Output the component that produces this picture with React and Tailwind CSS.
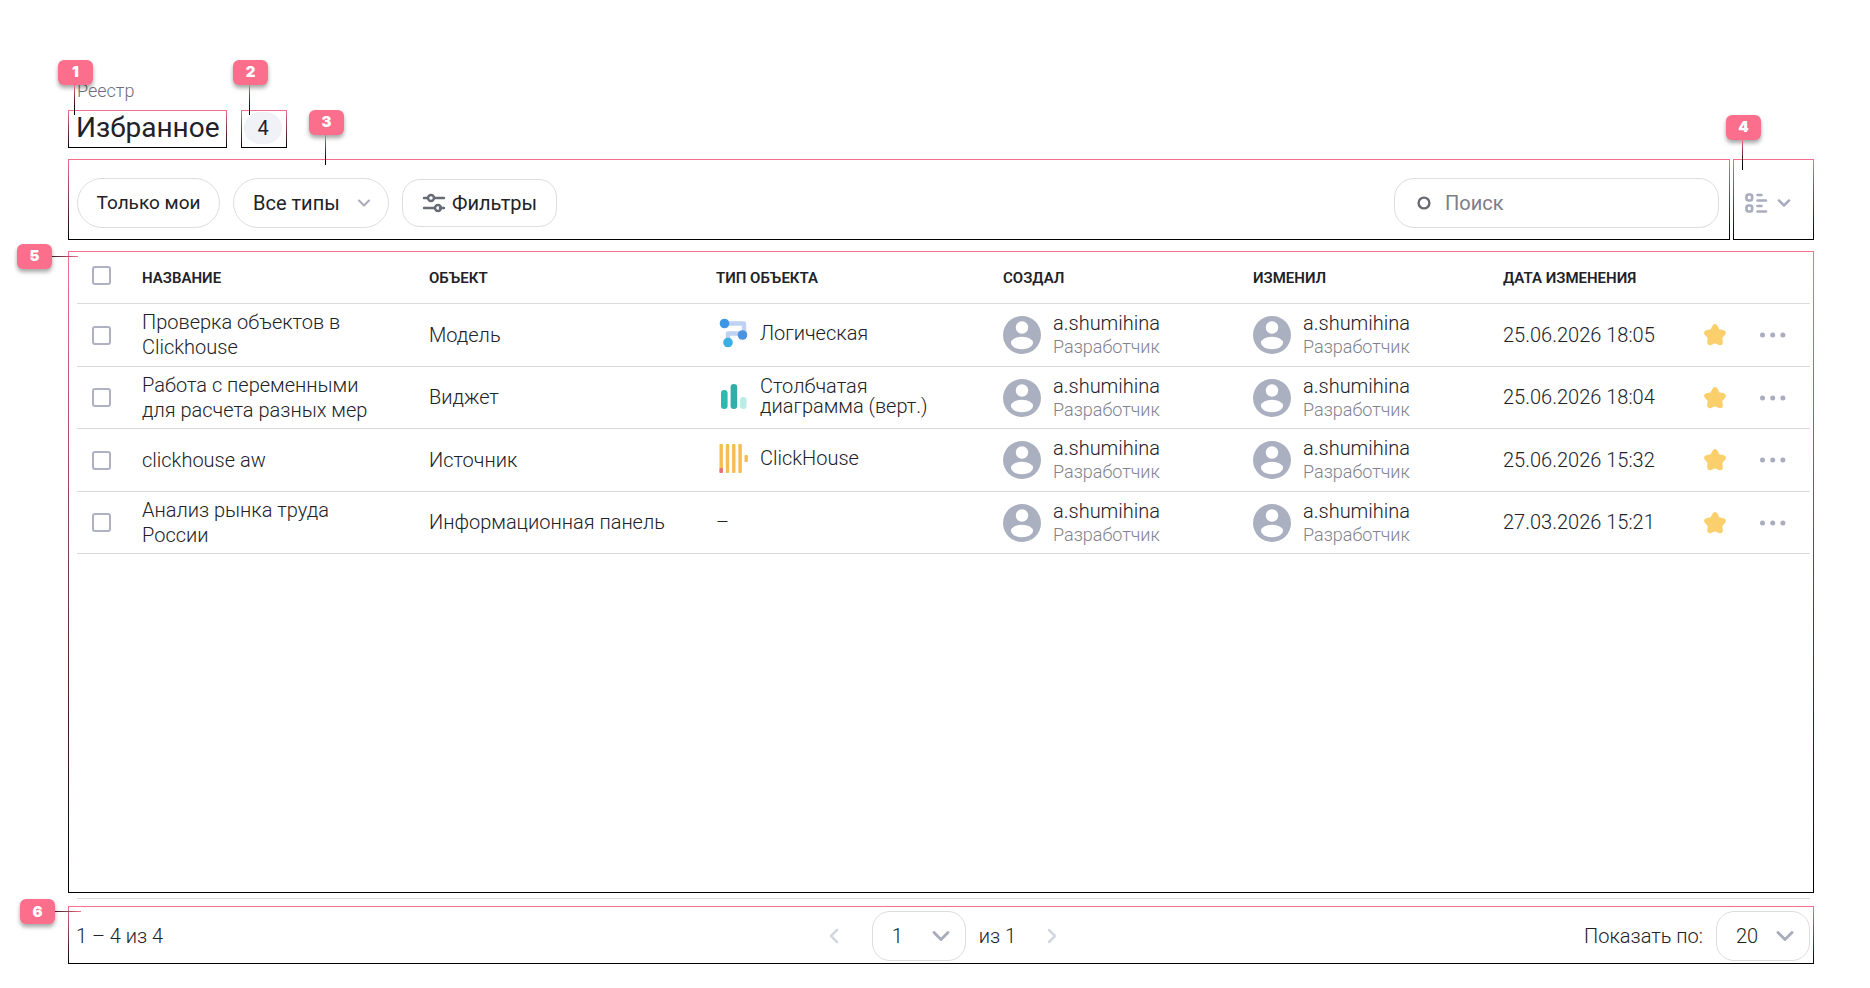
import { ChevronDown, ChevronLeft, ChevronRight } from 'lucide-react';

const ROWS = [
  { name: 'Проверка объектов в Clickhouse', object: 'Модель', type: 'Логическая', icon: LogicIcon, date: '25.06.2026 18:05' },
  { name: 'Работа с переменными для расчета разных мер', object: 'Виджет', type: 'Столбчатая диаграмма (верт.)', icon: BarsIcon, date: '25.06.2026 18:04' },
  { name: 'clickhouse aw', object: 'Источник', type: 'ClickHouse', icon: ClickHouseIcon, date: '25.06.2026 15:32' },
  { name: 'Анализ рынка труда России', object: 'Информационная панель', type: null, date: '27.03.2026 15:21' },
];

const HEADERS = ['Название', 'Объект', 'Тип объекта', 'Создал', 'Изменил', 'Дата изменения'];

const FRAME = 'relative border border-solid [border-image:linear-gradient(#f9708d,#000)_1]';

function LogicIcon() {
  return (
    <svg viewBox="0 0 32 32" className="size-8 shrink-0" fill="none">
      <path d="M7 6.5h19v11.5M10 25v-8.500h15" stroke="#bfd2f4" strokeWidth="4.4" strokeLinejoin="round" />
      <circle cx="6.500" cy="6.500" r="4.800" fill="#3e97e4" />
      <circle cx="24.500" cy="18" r="4.800" fill="#4b93e2" />
      <circle cx="10" cy="25.500" r="4.800" fill="#38b0e5" />
    </svg>
  );
}

function BarsIcon() {
  return (
    <svg viewBox="0 0 32 32" className="size-8 shrink-0">
      <rect x="3" y="10" width="6.6" height="19" rx="3.2" fill="#2fb9ae" />
      <rect x="12.600" y="4" width="6.6" height="25" rx="3.2" fill="#33ada9" />
      <rect x="22" y="17" width="6.6" height="12" rx="3.2" fill="#bdebe5" />
    </svg>
  );
}

function ClickHouseIcon() {
  return (
    <svg viewBox="0 0 32 32" className="size-8 shrink-0" fill="#f3bd50">
      <rect x="1.500" y="2" width="3.4" height="29" rx="1" />
      <rect x="7.800" y="2" width="3.4" height="29" rx="1" />
      <rect x="14.100" y="2" width="3.4" height="29" rx="1" />
      <rect x="20.400" y="2" width="3.4" height="29" rx="1" />
      <rect x="26.500" y="13" width="3.4" height="7" rx="1" />
      <rect x="1.500" y="26" width="3.4" height="5" rx="1" fill="#e46f84" />
    </svg>
  );
}

function Pin({ n, side, className }) {
  return (
    <div className={`absolute z-10 flex items-center ${side ? 'flex-row' : 'flex-col'} ${className}`}>
      <span className="flex h-[25px] w-[35px] items-center justify-center rounded-md bg-[#fb6f8c] font-['Inter'] text-[15px] font-black text-white shadow-[0_3px_4px_rgba(0,0,0,0.35)]">
        {n}
      </span>
      <span
        className={
          side
            ? 'h-px w-[26px] bg-linear-to-r from-[#3d1a24] to-[#fb6f8c]'
            : 'mr-[2px] h-[30px] w-px bg-linear-to-b from-[#fb6f8c] to-black'
        }
      />
    </div>
  );
}

function Select({ label, value, className, selectClass, chevronClass }) {
  return (
    <div className={`relative flex items-center ${className}`}>
      <select
        aria-label={label}
        defaultValue={value}
        className={`h-[50px] w-full appearance-none border border-[#dcdde1] bg-white pl-[19px] text-xl ${selectClass}`}
      >
        <option>{value}</option>
      </select>
      <ChevronDown className={`pointer-events-none absolute text-[#a9adb9] ${chevronClass}`} strokeWidth={2.5} />
    </div>
  );
}

function Checkbox({ label }) {
  return (
    <input
      type="checkbox"
      aria-label={label}
      className="ml-[15px] block size-[19px] appearance-none rounded-[3px] border-2 border-[#adb1c1] bg-white"
    />
  );
}

function User() {
  return (
    <div className="flex items-center gap-3">
      <svg viewBox="0 0 38 38" className="size-[38px] shrink-0">
        <circle cx="19" cy="19" r="19" fill="#abb0c1" />
        <circle cx="19" cy="11.5" r="6.2" fill="#fff" />
        <ellipse cx="19" cy="27" rx="11" ry="6.2" fill="#fff" />
      </svg>
      <div>
        <div className="text-xl leading-6">a.shumihina</div>
        <div className="text-lg leading-6 text-[#7f828e]">Разработчик</div>
      </div>
    </div>
  );
}

export default function App() {
  return (
    <div className="flex min-h-screen flex-col bg-white pt-[79px] pr-14 pb-6 pl-[68px] font-['Roboto',sans-serif] text-[#212227]">
      <header>
        <div className="mb-[7px] pl-[9px] text-lg leading-6 font-light text-[#6c6f7b]">Реестр</div>
        <div className="flex gap-[14px]">
          <div className={`${FRAME} h-[38px] w-[159px] pl-[7px]`}>
            <Pin n={1} className="-top-[51px] -left-[11px]" />
            <h1 className="text-[28px] leading-[34px]">Избранное</h1>
          </div>
          <div className={`${FRAME} h-[38px] w-[46px] pt-px pl-[2px]`}>
            <Pin n={2} className="-top-[51px] -left-[9px]" />
            <span className="flex h-8 w-[38px] items-center justify-center rounded-full bg-[#f1f2f8] text-xl">4</span>
          </div>
        </div>
      </header>

      <div className="mt-[11px] flex gap-[3px]">
        <div className={`${FRAME} flex h-[81px] flex-1 items-center gap-[13px] pt-[7px] pr-[10px] pl-2`}>
          <Pin n={3} className="-top-[50px] left-60" />
          <button className="h-[50px] w-[143px] rounded-full border border-[#dcdde1] text-[19px]">Только мои</button>
          <Select
            label="Тип объекта"
            value="Все типы"
            className="w-[156px]"
            selectClass="rounded-full"
            chevronClass="right-[15px] size-5"
          />
          <button className="flex h-12 w-[155px] items-center justify-center gap-[6px] rounded-[18px] border border-[#dcdde1] text-xl">
            <svg viewBox="0 0 24 24" className="size-6" fill="none" stroke="#666b76" strokeWidth="2.4" strokeLinecap="round">
              <path d="M2 7h4M12 7h10M2 17h10M18 17h4" />
              <circle cx="9" cy="7" r="3" />
              <circle cx="16" cy="17" r="3" />
            </svg>
            Фильтры
          </button>
          <label className="ml-auto flex h-[50px] w-[325px] items-center gap-[14px] rounded-[20px] border border-[#dcdde1] pl-[22px]">
            <svg viewBox="0 0 14 14" className="size-[14px]">
              <circle cx="7" cy="7" r="5.4" fill="none" stroke="#666a73" strokeWidth="2.4" />
            </svg>
            <input
              type="text"
              aria-label="Поиск"
              placeholder="Поиск"
              className="min-w-0 flex-1 text-xl outline-none placeholder:text-[#7c7e87]"
            />
          </label>
        </div>
        <div className={`${FRAME} flex h-[81px] w-[81px] items-center pt-[7px] pl-[10px]`}>
          <Pin n={4} className="-top-[45px] -left-2" />
          <button aria-label="Вид списка" className="flex items-center gap-[6px] text-[#a9adbd]">
            <svg viewBox="0 0 24 24" className="size-6" fill="none" stroke="currentColor" strokeWidth="2.6" strokeLinecap="round">
              <rect x="2.5" y="3.5" width="5.6" height="6" rx="2" />
              <rect x="2.5" y="14.5" width="5.6" height="6" rx="2" />
              <path d="M13.500 4h4M13.500 9.500h8.500M13.500 15h4M13.500 20.500h8.500" />
            </svg>
            <ChevronDown className="size-5" strokeWidth={3} />
          </button>
        </div>
      </div>

      <div className={`${FRAME} mt-[11px] flex-1 pr-[3px] pl-2`}>
        <Pin n={5} side className="-top-2 -left-[52px]" />
        <table className="w-full table-fixed border-separate border-spacing-0 text-left text-xl leading-[25px]">
          <colgroup>
            <col className="w-[65px]" />
            <col />
            <col />
            <col />
            <col className="w-[250px]" />
            <col className="w-[250px]" />
            <col className="w-[184px]" />
            <col className="w-14" />
            <col className="w-[67px]" />
          </colgroup>
          <thead>
            <tr className="h-[52px] [&>th]:border-b [&>th]:border-[#d9dadd]">
              <th className="pb-1"><Checkbox label="Выбрать все" /></th>
              {HEADERS.map((h) => (
                <th key={h} className="pt-[2px] text-[15px] font-semibold whitespace-nowrap uppercase">{h}</th>
              ))}
              <th />
              <th />
            </tr>
          </thead>
          <tbody className="font-light">
            {ROWS.map(({ name, object, type, icon: Icon, date }) => (
              <tr key={name} className="odd:h-[63px] even:h-[62px] [&>td]:border-b [&>td]:border-[#d9dadd]">
                <td><Checkbox label={name} /></td>
                <td className="pr-11">{name}</td>
                <td>{object}</td>
                <td className="pr-11">
                  {type ? (
                    <div className="flex items-center gap-[10px] pb-1 pl-[2px] leading-5">
                      <Icon />
                      {type}
                    </div>
                  ) : '–'}
                </td>
                <td><User /></td>
                <td><User /></td>
                <td className="whitespace-nowrap">{date}</td>
                <td>
                  <button aria-label="Убрать из избранного" className="mx-auto block">
                    <svg viewBox="0 0 24 24" className="size-6" fill="#fbcf6b" stroke="#fbcf6b" strokeWidth="5.6" strokeLinejoin="round">
                      <path d="M12 4l2.500 4.800 5.500 1.100-3.500 4.100.5 5.400-5-2.200-5 2.200.5-5.400L4 9.900l5.500-1.100z" />
                    </svg>
                  </button>
                </td>
                <td className="pr-2">
                  <button aria-label="Действия" className="mx-auto block">
                    <svg viewBox="0 0 28 8" className="h-2 w-7" fill="#a9adbd">
                      <circle cx="3.5" cy="4" r="2.5" />
                      <circle cx="13.700" cy="4" r="2.5" />
                      <circle cx="23.900" cy="4" r="2.5" />
                    </svg>
                  </button>
                </td>
              </tr>
            ))}
          </tbody>
        </table>
      </div>

      <hr className="mt-[5px] mr-1 ml-[9px] border-[#dadbdd]" />

      <footer className={`${FRAME} mt-[7px] grid h-[58px] grid-cols-[1fr_auto_1fr] items-center pt-[2px] pr-[3px] pl-[7px] text-xl font-light`}>
        <Pin n={6} side className="-top-2 -left-[49px]" />
        <span>1 – 4 из 4</span>
        <nav className="flex items-center">
          <button aria-label="Предыдущая страница" className="text-[#d3d7df]"><ChevronLeft className="size-6" strokeWidth={2.5} /></button>
          <Select
            label="Страница"
            value="1"
            className="mr-[13px] ml-[26px] w-[94px]"
            selectClass="rounded-[18px]"
            chevronClass="right-[11px] size-7"
          />
          <span>из 1</span>
          <button aria-label="Следующая страница" className="ml-6 text-[#d3d7df]"><ChevronRight className="size-6" strokeWidth={2.5} /></button>
        </nav>
        <div className="flex items-center justify-end gap-[13px]">
          <span>Показать по:</span>
          <Select
            label="Показать по"
            value="20"
            className="w-[94px]"
            selectClass="rounded-[18px]"
            chevronClass="right-[11px] size-7"
          />
        </div>
      </footer>
    </div>
  );
}
